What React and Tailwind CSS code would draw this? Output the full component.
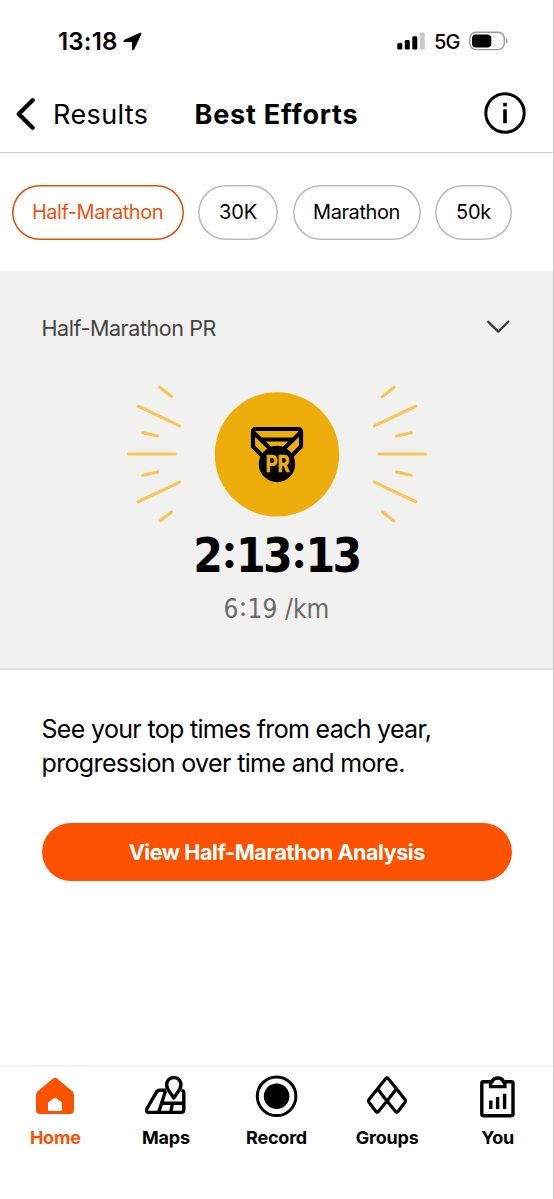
const distances = [
  { label: "Half-Marathon", width: "w-[172px]", tracking: "tracking-[-0.46px]" },
  { label: "30K", width: "w-[80px]", tracking: "tracking-[-0.2px]" },
  { label: "Marathon", width: "w-[128px]", tracking: "tracking-[-0.4px]" },
  { label: "50k", width: "w-[77px]", tracking: "tracking-[-0.2px]" },
];

// left half of the sunburst, mirrored for the right half
const rays = [
  [-117.2, -66.8, -105.5, -57.6],
  [-138.7, -47.7, -97.4, -28.1],
  [-134.2, -21.2, -119.4, -18],
  [-148.4, 0, -102, 0],
  [-134.2, 21.2, -119.4, 18],
  [-138.7, 47.7, -97.4, 28.1],
  [-116.8, 66.8, -105.5, 58],
];

function StatusBar() {
  return (
    <div className="flex h-[76px] items-start justify-between pt-[25px] pr-[45px] pl-[58px]">
      <div className="flex h-8 items-center gap-[5px]">
        <span className="w-[60px] pt-px text-[24px] font-semibold tracking-[0.2px]">13:18</span>
        <svg width="19" height="19" viewBox="0 0 19 19" stroke="black" strokeWidth="1" strokeLinejoin="round">
          <path d="M17.2 1.2 L1.2 8.4 C0.4 8.9 0.5 9.6 1.4 9.6 H8.6 C9.2 9.6 9.5 9.9 9.5 10.5 V17 C9.5 18 10.3 18.2 10.8 17.2 L17.9 1.8 C18.2 1.2 17.8 0.9 17.2 1.2 Z" />
        </svg>
      </div>
      <div className="flex h-8 items-center">
        <svg width="28" height="18" viewBox="0 0 28 18">
          <rect x="0.3" y="11" width="5" height="6.5" rx="1.3" />
          <rect x="7.8" y="8" width="5" height="9.5" rx="1.3" />
          <rect x="15.3" y="4.3" width="5" height="13.2" rx="1.3" />
          <rect x="22.8" y="0.5" width="5" height="17" rx="1.3" fill="#c9c9c9" />
        </svg>
        <span className="ml-[9px] w-[35px] pt-0.5 text-[20px] font-medium tracking-[-0.9px] whitespace-nowrap">5G</span>
        <svg width="39" height="20" viewBox="0 0 39 20">
          <rect x="0.9" y="1.2" width="34.4" height="17.4" rx="6" fill="none" stroke="#9a9a9a" strokeWidth="1.4" />
          <rect x="3" y="3.4" width="19.3" height="13" rx="4" />
          <path d="M37 7.2 C39 8 39 11.8 37 12.6 Z" fill="#8a8a8a" />
        </svg>
      </div>
    </div>
  );
}

function Header() {
  return (
    <header className="flex h-[77px] items-center border-b border-[#cfcfcf] pr-[27px] pl-[15px]">
      <svg className="mb-px" width="20" height="34" viewBox="0 0 20 34" fill="none" stroke="black" strokeWidth="4.3" strokeLinecap="round" strokeLinejoin="round">
        <path d="M17.6 3.2 L3.8 17 L17.6 30.8" />
      </svg>
      <span className="ml-[18px] w-[141.5px] pt-0.5 text-[27px] tracking-[0.4px]">Results</span>
      <h1 className="pt-0.5 text-[27px] font-bold tracking-[0.8px] whitespace-nowrap">Best Efforts</h1>
      <svg className="mb-0.5 ml-auto" width="42" height="42" viewBox="0 0 42 42">
        <circle cx="21" cy="21" r="19.2" fill="none" stroke="black" strokeWidth="3" />
        <rect x="19.2" y="10.8" width="3.6" height="3.6" />
        <rect x="19.2" y="17.3" width="3.6" height="14" />
      </svg>
    </header>
  );
}

function PrMedal() {
  return (
    <svg width="304" height="140" viewBox="-152 -70 304 140">
      <g stroke="#f9c557" strokeWidth="3.2" strokeLinecap="round">
        {rays.map(([x1, y1, x2, y2]) => (
          <g key={`${x1}${y1}`}>
            <line x1={x1} y1={y1} x2={x2} y2={y2} />
            <line x1={-x1} y1={y1} x2={-x2} y2={y2} />
          </g>
        ))}
      </g>
      <circle cx="0" cy="0.4" r="62.2" fill="#edae0b" />
      <g fill="none" stroke="black" strokeWidth="4.2" strokeLinejoin="round">
        <path d="M-15 1.5 L-24 -7.5 V-22 Q-24 -25 -21 -25 H21 Q24 -25 24 -22 V-7.5 L15 1.5" />
        <path d="M-23.5 -21.5 L-6 -4.5 M23.5 -21.5 L6 -4.5 M-15 -14.5 H15" />
      </g>
      <circle cx="0" cy="10" r="18.2" />
      <text
        x="0.8"
        y="17.6"
        textAnchor="middle"
        textLength="24"
        lengthAdjust="spacingAndGlyphs"
        fill="#edae0b"
        stroke="#edae0b"
        strokeWidth="0.7"
        className="font-['Roboto',sans-serif] text-[23px] font-bold"
      >
        PR
      </text>
    </svg>
  );
}

// round colons, centred on the height of the digits
function Time({ value }) {
  return value.split(":").map((part, i) => (
    <span key={i}>
      {i > 0 && <span className="relative -top-[0.09em] px-[0.025em] font-['Inter',sans-serif]">:</span>}
      {part}
    </span>
  ));
}

function HomeIcon() {
  return (
    <svg width="44" height="44" viewBox="0 0 44 44">
      <path d="M20 3.6 Q22 2 24 3.6 L39.6 16.4 Q41 17.8 41 20 V35 Q41 39 37 39 H7 Q3 39 3 35 V20 Q3 17.8 4.4 16.4 Z" fill="#fc5200" />
      <path d="M15 36 V27.5 L20.3 23.6 Q22 22.4 23.7 23.6 L29 27.5 V36 Z" fill="white" />
    </svg>
  );
}

function MapsIcon() {
  return (
    <svg width="44" height="44" viewBox="0 0 44 44" fill="none" stroke="black" strokeWidth="3.4" strokeLinejoin="round">
      <path d="M22 15.2 H15.5 Q13.8 15.2 12.8 16.7 L3 33.5 Q1.5 37.4 5 37.4 H37 Q39.8 37.4 39.8 34.6 V18 Q39.8 15.8 37.5 15.2" />
      <path d="M21.5 16 L14.8 37 M18.5 28.2 H39.5 M28.5 28.2 L26.8 37" />
      <path d="M29.8 23 L24 14.5 C20.8 9 23.5 2.6 29.8 2.6 C36.1 2.6 38.8 9 35.6 14.5 Z" fill="white" />
    </svg>
  );
}

function RecordIcon() {
  return (
    <svg width="44" height="44" viewBox="0 0 44 44">
      <circle cx="22.6" cy="21.3" r="19.3" fill="none" stroke="black" strokeWidth="3" />
      <circle cx="22.6" cy="21.3" r="12.8" />
    </svg>
  );
}

function GroupsIcon() {
  return (
    <svg width="44" height="44" viewBox="0 0 44 44" fill="none" stroke="black" strokeWidth="3.2" strokeLinejoin="round">
      <path d="M20.8 3.6 Q22 2.2 23.2 3.6 L40.2 24.8 Q41 26 40.2 27 L33 36.5 Q31.8 38 30.6 36.5 L22 26 L13.4 36.5 Q12.2 38 11 36.5 L3.8 27 Q3 26 3.8 24.8 Z" />
      <path d="M13 14.5 L22 26 L31 14.5" />
    </svg>
  );
}

function YouIcon() {
  return (
    <svg width="44" height="44" viewBox="0 0 44 44" fill="none" stroke="black" strokeWidth="3.4">
      <path d="M15 6.8 H7.5 Q5.8 6.8 5.8 8.5 V39 Q5.8 40.7 7.5 40.7 H35.3 Q37 40.7 37 39 V8.5 Q37 6.8 35.3 6.8 H28" />
      <path d="M14.6 11.6 V6.8 H16 C17.5 1.8 26 1.8 27.5 6.8 H28.9 V11.6 Z" fill="white" />
      <path d="M14.8 25.5 V34 M21.6 22 V34 M28.6 18.8 V34" />
    </svg>
  );
}

const tabs = [
  { label: "Home", Icon: HomeIcon, active: true },
  { label: "Maps", Icon: MapsIcon },
  { label: "Record", Icon: RecordIcon },
  { label: "Groups", Icon: GroupsIcon },
  { label: "You", Icon: YouIcon },
];

export default function App() {
  return (
    <div className="flex h-[1199px] w-[554px] flex-col overflow-hidden border-r border-[#c8c8c8] bg-white font-['Inter',sans-serif] text-black">
      <StatusBar />
      <Header />

      <div className="flex h-[118px] gap-[14.5px] pt-8 pl-[11.5px]">
        {distances.map(({ label, width, tracking }, i) => (
          <button
            key={label}
            className={`h-[54.5px] shrink-0 rounded-full text-[20px] ${width} ${tracking} ${
              i === 0 ? "text-[#f0530f] shadow-[inset_0_0_0_1.6px_#e8500f]" : "shadow-[inset_0_0_0_1.6px_#bdbdbb]"
            }`}
          >
            {label}
          </button>
        ))}
      </div>

      <section className="flex h-[399px] flex-col items-center border-b-2 border-[#dfdfde] bg-[#f1f1ef]">
        <div className="flex w-full items-center justify-between pt-10 pr-[43px] pl-[41.5px]">
          <h2 className="text-[21.5px] leading-[34px] tracking-[-0.42px] text-[#444442]">Half-Marathon PR</h2>
          <svg className="mb-0.5" width="24" height="14" viewBox="0 0 24 14" fill="none" stroke="#3a3a38" strokeWidth="2.3" strokeLinecap="round" strokeLinejoin="round">
            <path d="M2.2 1.8 L12.3 11.6 L22.3 1.8" />
          </svg>
        </div>
        <div className="mt-[39px]">
          <PrMedal />
        </div>
        <p className="mt-1.5 font-['DejaVu_Sans_Condensed','DejaVu_Sans',sans-serif] text-[47.5px] leading-[50px] font-bold tracking-[-2.7px]">
          <Time value="2:13:13" />
        </p>
        <p className="mt-[11px] font-['DejaVu_Sans_Condensed','DejaVu_Sans',sans-serif] text-[26px] leading-[34px] tracking-[0.1px] text-[#6a6a68]">
          <Time value="6:19" /> /km
        </p>
      </section>

      <section className="flex-1 px-[41.5px] pt-[42px]">
        <p className="text-[25px] leading-[34px] tracking-[-0.68px] whitespace-nowrap">
          See your top times from each year,
          <br />
          <span className="tracking-[-0.64px]">progression over time and more.</span>
        </p>
        <button className="mt-[43px] h-[58px] w-[470.5px] rounded-full bg-[#fc5200] text-[21.5px] font-bold tracking-[-0.42px] text-white">
          View Half-Marathon Analysis
        </button>
      </section>

      <nav className="flex h-[134px] border-t-2 border-[#f3f3f3] pt-2">
        {tabs.map(({ label, Icon, active }) => (
          <a key={label} className={`flex flex-1 flex-col items-center ${active ? "text-[#fc5200]" : "text-black"}`}>
            <Icon />
            <span className="mt-[7px] text-[18px] leading-6 font-bold tracking-[-0.2px]">{label}</span>
          </a>
        ))}
      </nav>
    </div>
  );
}
